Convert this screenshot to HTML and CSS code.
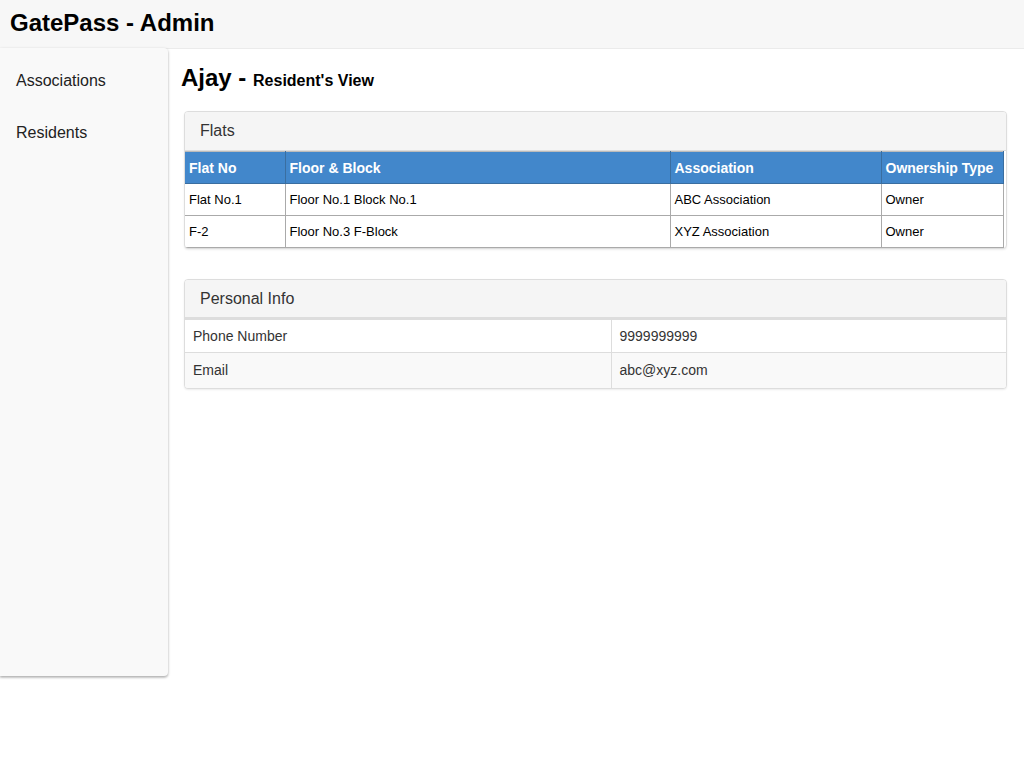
FILE: index.html
```html
<!DOCTYPE html>
<html>
<head>
<meta charset="utf-8">
<title>GatePass - Admin</title>
<link rel="stylesheet" href="styles.css">
</head>
<body>
<header class="topbar">
  <h1 class="brand">GatePass - Admin</h1>
</header>
<div class="layout">
  <nav class="sidebar">
    <a class="nav-item" href="#">Associations</a>
    <a class="nav-item" href="#">Residents</a>
  </nav>
  <main class="content">
    <h2 class="page-title">Ajay - <small>Resident's View</small></h2>
    <section class="panel">
      <div class="panel-heading tall">Flats</div>
      <table class="flats">
        <colgroup>
          <col class="c1"><col class="c2"><col class="c3"><col class="c4">
        </colgroup>
        <thead>
          <tr><th>Flat No</th><th>Floor &amp; Block</th><th>Association</th><th>Ownership Type</th></tr>
        </thead>
        <tbody>
          <tr><td>Flat No.1</td><td>Floor No.1 Block No.1</td><td>ABC Association</td><td>Owner</td></tr>
          <tr><td>F-2</td><td>Floor No.3 F-Block</td><td>XYZ Association</td><td>Owner</td></tr>
        </tbody>
      </table>
    </section>
    <section class="panel">
      <div class="panel-heading">Personal Info</div>
      <table class="info">
        <tbody>
          <tr class="first"><td class="label">Phone Number</td><td>9999999999</td></tr>
          <tr class="striped"><td class="label">Email</td><td>abc@xyz.com</td></tr>
        </tbody>
      </table>
    </section>
  </main>
</div>
</body>
</html>
```
FILE: styles.css
```css
* { box-sizing: border-box; }
html, body { margin: 0; padding: 0; }
body {
  font-family: "Liberation Sans", Arial, sans-serif;
  color: #000;
  background: #fff;
  min-height: 100vh;
}
.topbar {
  height: 49px;
  background: #f7f7f7;
  border-bottom: 1px solid #ebebeb;
  padding: 0 10px;
  display: flex;
  align-items: center;
}
.brand {
  margin: 0;
  font-size: 24px;
  font-weight: bold;
  line-height: 1;
  padding-bottom: 2px;
}
.layout {
  display: flex;
  align-items: flex-start;
  margin-top: -1px;
  padding-bottom: 20px;
}
.sidebar {
  width: 168px;
  height: 628px;
  flex: none;
  background: #f9f9f9;
  border-radius: 0 4px 4px 0;
  box-shadow: 0 1px 3px rgba(0,0,0,0.25), 0 2px 2px rgba(0,0,0,0.12);
  padding-top: 21px;
  display: flex;
  flex-direction: column;
  position: relative;
  z-index: 1;
}
.nav-item {
  display: block;
  padding: 0 16px;
  height: 52px;
  line-height: 24px;
  font-size: 16px;
  color: #222;
  text-decoration: none;
}
.content {
  flex: 1;
  padding: 16px 17px 0 16px;
}
.page-title {
  margin: 0 0 16px -3px;
  font-size: 24px;
  font-weight: bold;
  line-height: 28px;
}
.page-title small {
  font-size: 16px;
  font-weight: bold;
}
.panel {
  border: 1px solid #ddd;
  border-radius: 4px;
  box-shadow: 0 1px 2px rgba(0,0,0,0.08);
  background: #fff;
  margin-bottom: 30px;
  overflow: hidden;
}
.panel-heading {
  background: #f5f5f5;
  border-bottom: 1px solid #ddd;
  height: 38px;
  padding: 0 15px;
  display: flex;
  align-items: center;
  font-size: 16px;
  color: #333;
}
.panel-heading.tall { height: 39px; }
table {
  border-collapse: collapse;
  width: 100%;
}
.flats {
  width: calc(100% - 2px);
  table-layout: fixed;
}
.flats .c1 { width: 100px; }
.flats .c2 { width: 385px; }
.flats .c3 { width: 211px; }
.flats .c4 { width: auto; }
.flats th, .flats td {
  border: 1px solid #aaa;
  height: 32px;
  padding: 0 4px;
  text-align: left;
  vertical-align: middle;
}
.flats tr > :first-child { border-left: none; }
.flats th {
  background: #4287cb;
  color: #fff;
  font-size: 14px;
  font-weight: bold;
  border-color: #3a6ea0;
  border-top: 1px solid #bbb;
}
.flats td {
  font-size: 13px;
  color: #000;
}
.info td {
  border-top: 1px solid #ddd;
  border-left: 1px solid #ddd;
  padding: 8px;
  height: 35px;
  font-size: 14px;
  color: #333;
}
.info .first td { border-top: 2px solid #ddd; height: 33px; }
.info td:first-child { border-left: none; }
.info .label { width: 426px; }
.info .striped td { background: #f9f9f9; }
```
